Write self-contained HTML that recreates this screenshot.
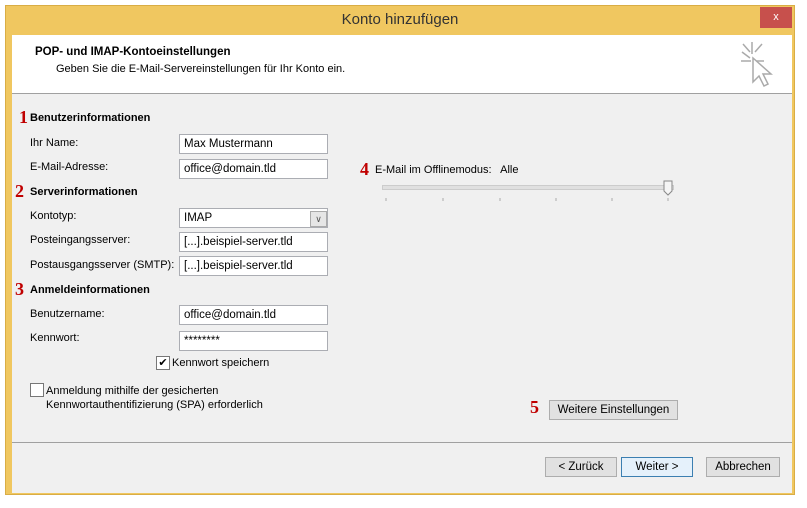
<!DOCTYPE html><html><head><style>
body{margin:0;width:807px;height:508px;background:#fff;position:relative;font-family:"Liberation Sans",sans-serif;font-size:11px;color:#000;overflow:hidden}
.a{position:absolute}
.win{left:5px;top:5px;width:790px;height:490px;background:#f0c760;border:1px solid #d9ad45;box-sizing:border-box}
.in{left:12px;top:35px;width:780px;height:458px;background:#f0f0f0}
.hd{left:12px;top:35px;width:780px;height:58px;background:#fff;border-bottom:1px solid #a0a0a0}
.b{font-weight:bold}
.n{color:#c00000;font-weight:bold;font-size:18px;font-family:"Liberation Serif",serif}
.tb{background:#fff;border:1px solid #abadb3;height:20px;box-sizing:border-box;padding:3px 4px;font-size:11.5px;width:149px;left:179px}
.btn{background:#e1e1e1;border:1px solid #adadad;height:20px;box-sizing:border-box;text-align:center;line-height:18px;font-size:11.5px}
</style></head><body>
<div class="a win"></div>
<div class="a" style="left:5px;top:5px;width:790px;text-align:center;line-height:30px;font-size:15px;color:#333">Konto hinzufügen</div>
<div class="a" style="left:760px;top:7px;width:32px;height:21px;background:#c7504c;color:#fff;text-align:center;line-height:20px;font-size:11px">x</div>
<div class="a in"></div>
<div class="a hd"></div>
<div class="a b" style="left:35px;top:46px;font-size:11.5px">POP- und IMAP-Kontoeinstellungen</div>
<div class="a" style="left:56px;top:63px">Geben Sie die E-Mail-Servereinstellungen für Ihr Konto ein.</div>
<svg class="a" style="left:740px;top:40px" width="40" height="50"><g stroke="#aaa" stroke-width="1.5" fill="none"><path d="M12 2v12M2 12l8 6M1 21h10M3 4l7 8M22 4l-7 8M24 21H14"/><path d="M13 18v24l6-6 5 10 4-2-5-10h8z" fill="#fff"/></g></svg>
<span class="a n" style="left:19px;top:107px">1</span><div class="a b" style="left:30px;top:112px">Benutzerinformationen</div>
<div class="a" style="left:30px;top:137px">Ihr Name:</div><div class="a tb" style="top:134px">Max Mustermann</div>
<div class="a" style="left:30px;top:161px">E-Mail-Adresse:</div><div class="a tb" style="top:159px">office@domain.tld</div>
<span class="a n" style="left:15px;top:181px">2</span><div class="a b" style="left:30px;top:186px">Serverinformationen</div>
<div class="a" style="left:30px;top:210px">Kontotyp:</div><div class="a tb" style="top:208px">IMAP</div>
<div class="a" style="left:310px;top:211px;width:15px;height:14px;background:#e6e6e6;border:1px solid #aaa;font-size:9px;text-align:center;line-height:14px;color:#555">&#8744;</div>
<div class="a" style="left:30px;top:234px">Posteingangsserver:</div><div class="a tb" style="top:232px">[...].beispiel-server.tld</div>
<div class="a" style="left:30px;top:259px">Postausgangsserver (SMTP):</div><div class="a tb" style="top:256px">[...].beispiel-server.tld</div>
<span class="a n" style="left:15px;top:279px">3</span><div class="a b" style="left:30px;top:284px">Anmeldeinformationen</div>
<div class="a" style="left:30px;top:308px">Benutzername:</div><div class="a tb" style="top:305px">office@domain.tld</div>
<div class="a" style="left:30px;top:332px">Kennwort:</div><div class="a tb" style="top:331px">********</div>
<div class="a" style="left:156px;top:356px;width:12px;height:12px;background:#fff;border:1px solid #777;font-size:11px;line-height:12px;text-align:center">✔</div>
<div class="a" style="left:172px;top:357px">Kennwort speichern</div>
<div class="a" style="left:30px;top:383px;width:12px;height:12px;background:#fff;border:1px solid #777"></div>
<div class="a" style="left:46px;top:384px;line-height:14px">Anmeldung mithilfe der gesicherten<br>Kennwortauthentifizierung (SPA) erforderlich</div>
<span class="a n" style="left:360px;top:159px">4</span><div class="a" style="left:375px;top:164px">E-Mail im Offlinemodus:&nbsp;&nbsp; Alle</div>
<div class="a" style="left:382px;top:185px;width:290px;height:3px;background:#e0e0e0;border:1px solid #ccc"></div>
<svg class="a" style="left:382px;top:180px" width="300" height="25"><path d="M282 1h8v10l-4 4-4-4z" fill="#f5f5f5" stroke="#888"/><g stroke="#aaa"><path d="M4 18v3M61 18v3M118 18v3M174 18v3M230 18v3M286 18v3"/></g></svg>
<span class="a n" style="left:530px;top:397px">5</span>
<div class="a btn" style="left:549px;top:400px;width:129px">Weitere Einstellungen</div>
<div class="a" style="left:12px;top:442px;width:780px;border-top:1px solid #a0a0a0"></div>
<div class="a btn" style="left:545px;top:457px;width:72px">&lt; Zurück</div>
<div class="a btn" style="left:621px;top:457px;width:72px;border-color:#3c7fb1;background:#e5f1fb">Weiter &gt;</div>
<div class="a btn" style="left:706px;top:457px;width:74px">Abbrechen</div>
</body></html>
